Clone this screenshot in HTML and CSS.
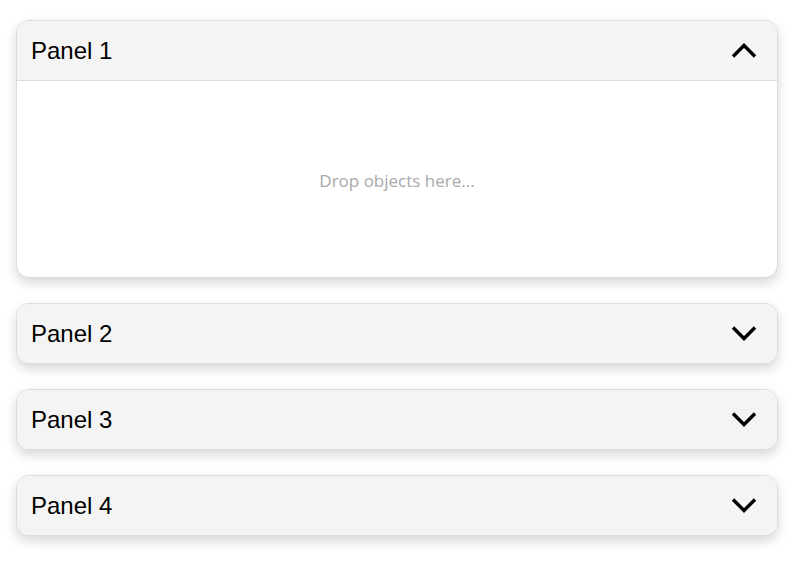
FILE: index.html
```html
<!DOCTYPE html>
<html>
<head>
<meta charset="utf-8">
<link rel="stylesheet" href="styles.css">
</head>
<body>
<div class="accordion">
  <div class="panel open">
    <div class="panel-header">
      <span class="title">Panel 1</span>
      <svg class="chev" width="26" height="15" viewBox="0 0 26 15"><path d="M2 13.5 L13 2.5 L24 13.5" fill="none" stroke="#000" stroke-width="3.4"/></svg>
    </div>
    <div class="panel-body">
      <span class="placeholder">Drop objects here...</span>
    </div>
  </div>
  <div class="panel">
    <div class="panel-header">
      <span class="title">Panel 2</span>
      <svg class="chev" width="26" height="15" viewBox="0 0 26 15"><path d="M2 1.5 L13 12.5 L24 1.5" fill="none" stroke="#000" stroke-width="3.4"/></svg>
    </div>
  </div>
  <div class="panel">
    <div class="panel-header">
      <span class="title">Panel 3</span>
      <svg class="chev" width="26" height="15" viewBox="0 0 26 15"><path d="M2 1.5 L13 12.5 L24 1.5" fill="none" stroke="#000" stroke-width="3.4"/></svg>
    </div>
  </div>
  <div class="panel">
    <div class="panel-header">
      <span class="title">Panel 4</span>
      <svg class="chev" width="26" height="15" viewBox="0 0 26 15"><path d="M2 1.5 L13 12.5 L24 1.5" fill="none" stroke="#000" stroke-width="3.4"/></svg>
    </div>
  </div>
</div>
</body>
</html>
```
FILE: styles.css
```css
html, body {
  margin: 0;
  padding: 0;
  background: #fff;
}
.accordion {
  display: flex;
  flex-direction: column;
  gap: 25px;
  padding: 20px 0 40px 16px;
  width: 762px;
}
.panel {
  border: 1px solid #dcdcdc;
  border-radius: 13px;
  overflow: hidden;
  background: #fff;
  box-shadow: 0 5px 12px rgba(0, 0, 0, 0.16);
}
.panel-header {
  height: 59px;
  background: #f4f4f4;
  display: flex;
  align-items: center;
  justify-content: space-between;
  padding: 0 20px 0 14px;
}
.open .panel-header {
  border-bottom: 1px solid #dcdcdc;
}
.title {
  font-family: "Liberation Sans", Arial, sans-serif;
  font-size: 24px;
  color: #000;
}
.chev {
  display: block;
}
.panel-body {
  height: 196px;
  display: flex;
  align-items: center;
  justify-content: center;
  padding-top: 2px;
  box-sizing: border-box;
}
.placeholder {
  font-family: "Open Sans", sans-serif;
  font-size: 17px;
  color: #a9a9a9;
}
```
